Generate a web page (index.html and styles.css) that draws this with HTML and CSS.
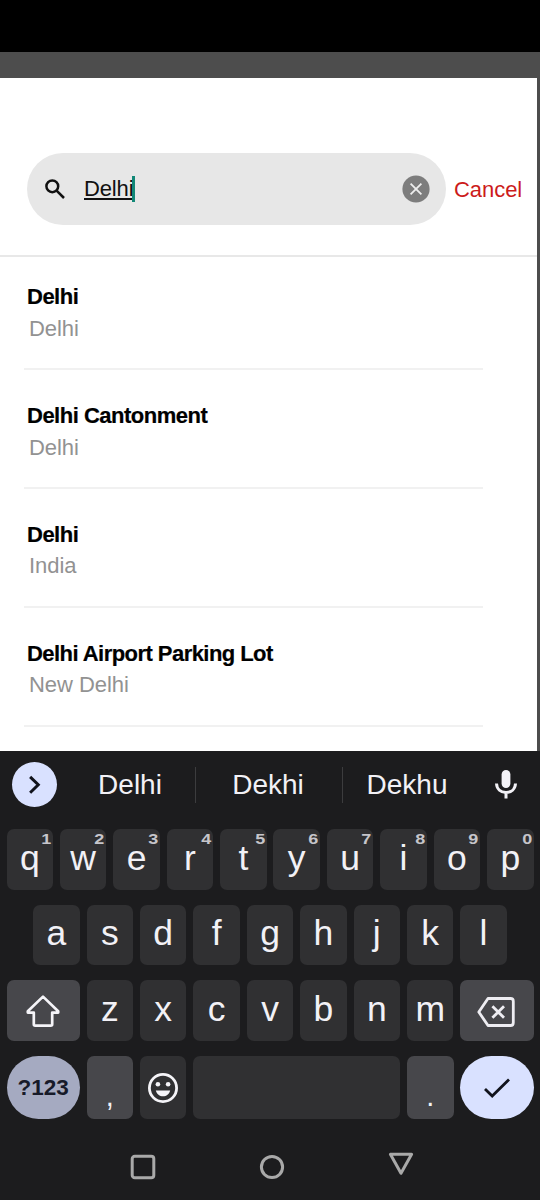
FILE: index.html
```
<!DOCTYPE html>
<html lang="en">
<head>
<meta charset="utf-8">
<title>Location search</title>
<link rel="stylesheet" href="styles.css">
</head>
<body>
<div class="phone">
  <div class="status"></div>
  <main class="backdrop">
    <section class="sheet">
      <header class="search">
        <div class="field">
          <svg class="lens" viewBox="0 0 20 20"><circle cx="7.3" cy="7.3" r="5.9"/><path d="M11.6 11.6 19 19"/></svg>
          <span class="query">Delhi</span><i class="caret"></i>
          <svg class="clear" viewBox="0 0 28 28"><circle cx="14" cy="14" r="13.6"/><path d="M8.6 8.6 19.4 19.4M19.4 8.6 8.6 19.4"/></svg>
        </div>
        <span class="cancel">Cancel</span>
      </header>
      <ul class="results">
        <li class="item"><b class="name">Delhi</b><span class="area">Delhi</span></li>
        <li class="item"><b class="name">Delhi Cantonment</b><span class="area">Delhi</span></li>
        <li class="item"><b class="name">Delhi</b><span class="area">India</span></li>
        <li class="item"><b class="name long">Delhi Airport Parking Lot</b><span class="area">New Delhi</span></li>
      </ul>
    </section>
  </main>
  <section class="keyboard">
    <div class="suggest">
      <div class="more"><svg viewBox="0 0 46 46"><path d="M19.3 15 27.5 23 19.3 31"/></svg></div>
      <span class="word w1">Delhi</span>
      <span class="word w2">Dekhi</span>
      <span class="word w3">Dekhu</span>
      <svg class="mic" viewBox="0 0 22 30"><rect x="6.6" y="1" width="8.8" height="18" rx="4.4"/><path d="M1.5 14.5C1.8 20.2 5.8 23.4 11 23.4S20.2 20.2 20.5 14.5M11 23.5V29.5"/></svg>
    </div>
    <div class="row r1">
      <div class="key">q<sup>1</sup></div><div class="key">w<sup>2</sup></div><div class="key">e<sup>3</sup></div><div class="key">r<sup>4</sup></div><div class="key">t<sup>5</sup></div><div class="key">y<sup>6</sup></div><div class="key">u<sup>7</sup></div><div class="key">i<sup>8</sup></div><div class="key">o<sup>9</sup></div><div class="key">p<sup>0</sup></div>
    </div>
    <div class="row r2">
      <div class="key">a</div><div class="key">s</div><div class="key">d</div><div class="key">f</div><div class="key">g</div><div class="key">h</div><div class="key">j</div><div class="key">k</div><div class="key">l</div>
    </div>
    <div class="row r3">
      <div class="key wide tone"><svg class="shift" viewBox="0 0 34 34"><path d="M17 2.6 32.2 17.2V18.6H26.2V30.2Q26.2 31.6 24.8 31.6H9.2Q7.8 31.6 7.8 30.2V18.6H1.8V17.2Z"/></svg></div>
      <div class="key">z</div><div class="key">x</div><div class="key">c</div><div class="key">v</div><div class="key">b</div><div class="key">n</div><div class="key">m</div>
      <div class="key wide tone"><svg class="erase" viewBox="0 0 38 30"><path d="M11 1.5H33.5Q36.3 1.5 36.3 4.3V25.7Q36.3 28.5 33.5 28.5H11L1.8 15Z"/><path d="M15.4 9.2 27 20.8M27 9.2 15.4 20.8"/></svg></div>
    </div>
    <div class="row r4">
      <div class="key wide symbols">?123</div>
      <div class="key tone punct">,</div>
      <div class="key"><svg class="smile" viewBox="0 0 32 32"><circle class="line" cx="16" cy="16" r="13.6"/><circle cx="10.9" cy="12.3" r="2.3"/><circle cx="21.1" cy="12.3" r="2.3"/><path d="M8.8 18.4H23.2C22.2 22 19.4 24.3 16 24.3S9.8 22 8.8 18.4Z"/></svg></div>
      <div class="key space"></div>
      <div class="key tone punct">.</div>
      <div class="key wide enter"><svg viewBox="0 0 28 22"><path d="M2 12 9.2 19 26 2.4"/></svg></div>
    </div>
    <nav class="nav">
      <svg class="recent" viewBox="0 0 26 26"><rect x="2.2" y="2.2" width="21.6" height="21.6" rx="2.6"/></svg>
      <svg class="home" viewBox="0 0 26 26"><circle cx="13" cy="13" r="10.6"/></svg>
      <svg class="back" viewBox="0 0 26 26"><path d="M2.4 3.2H23.6L13 22.2Z"/></svg>
    </nav>
  </section>
</div>
</body>
</html>
```
FILE: styles.css
```
* { box-sizing: border-box; }
body { margin: 0; background: #1c1c1e; font-family: "Liberation Sans", Arial, sans-serif; }
svg { display: block; flex: none; fill: none; }
.phone { width: 540px; height: 1200px; overflow: hidden; display: flex; flex-direction: column; }
.status { height: 51.5px; background: #000; flex: none; }
.backdrop { height: 699.8px; flex: none; padding: 26.7px 3px 0 0; background: #4d4d4d; }
.sheet { height: 100%; background: #fff; overflow: hidden; }

.search { height: 178.8px; padding: 75px 0 0 27px; display: flex; align-items: flex-start; border-bottom: 2px solid #e8e8e8; }
.field { width: 419px; height: 71.8px; border-radius: 36px; background: #e7e7e7; display: flex; align-items: center; padding: 0 16px 0 18px; }
.lens { width: 20px; height: 20px; margin-right: 19px; stroke: #111; stroke-width: 2.5; }
.query { font-size: 22px; line-height: 26px; letter-spacing: -.15px; color: #111; text-decoration: underline; text-decoration-thickness: 1.5px; text-underline-offset: 2px; }
.caret { width: 3px; height: 26px; background: #128877; margin-top: -1px; margin-left: -1px; }
.clear { width: 28px; height: 28px; margin-left: auto; stroke: #eee; stroke-width: 1.8; }
.clear circle { fill: #7d7d7d; stroke: none; }
.cancel { margin-left: 8px; font-size: 22px; line-height: 74px; letter-spacing: -.05px; color: #cc1b1b; }

.results { list-style: none; margin: 0; padding: 0 54px 0 24px; }
.item { height: 118.9px; padding: 0 0 23.8px 3px; display: flex; flex-direction: column; justify-content: flex-end; border-bottom: 2px solid #f1f1f1; line-height: 31.5px; font-size: 22px; }
.item:first-child { height: 113px; }
.name { color: #000; letter-spacing: -.5px; -webkit-text-stroke: .2px #000; }
.name.long { letter-spacing: -.55px; }
.area { color: #929292; padding-left: 2px; letter-spacing: -.05px; }

.keyboard { flex: 1; background: #1c1c1e; color: #f2f1f6; padding: 0 6.4px 0 6.5px; }
.suggest { height: 78px; display: flex; align-items: flex-start; padding: 10.5px 0 0 5.5px; }
.more { width: 45px; height: 45px; border-radius: 50%; background: #d9e1ff; }
.more svg { stroke: #11131c; stroke-width: 3; margin-left: -.6px; }
.word { height: 36px; margin-top: 5px; font-size: 28px; line-height: 35px; text-align: center; }
.w1 { width: 138px; padding-left: 8px; }
.w2 { width: 148px; border: solid #3c3c3e; border-width: 0 1.5px; padding-right: 2px; }
.w3 { width: 129px; padding-right: 1px; }
.mic { width: 22px; height: 30px; margin: 7px 0 0 22.8px; stroke: #f2f1f6; stroke-width: 3; }
.mic rect { fill: #f2f1f6; stroke: none; }

.row { display: flex; gap: 6.9px; margin-bottom: 15px; }
.key { position: relative; width: 46.5px; height: 100%; border-radius: 7px; background: #303032; display: flex; align-items: center; justify-content: center; font-size: 35.5px; line-height: 40px; padding-bottom: 4.5px; }
.r1 { height: 60.7px; }
.r1 .key { padding-bottom: 4px; }
.r2 { height: 60.5px; padding: 0 26.7px; }
.r3 { height: 61px; }
.r4 { height: 62.5px; margin: 0; }
.key sup { position: absolute; top: 1px; right: 1.6px; font-size: 15px; line-height: 17px; font-weight: bold; color: #c6c5ca; transform: scaleX(1.2); transform-origin: right; }
.row .wide { width: 73.2px; padding: 0; }
.tone { background: #47474b; }
.shift { width: 34px; height: 34px; stroke: #f5f4f8; stroke-width: 2.7; stroke-linejoin: round; }
.erase { width: 38px; height: 30px; stroke: #eeedf2; stroke-width: 2.8; stroke-linejoin: round; margin: 3px 0 0 -1px; }
.symbols { border-radius: 32px; background: #a5aac1; color: #171a29; font-size: 22.5px; font-weight: bold; }
.punct { font-size: 29px; padding: 16px 0 0; }
.smile { width: 32px; height: 32px; fill: #f5f4f8; }
.smile .line { fill: none; stroke: #f5f4f8; stroke-width: 2.8; }
.r4 .key:not(.punct) { padding-bottom: 0; }
.space { flex: 1; }
.enter { border-radius: 32px; background: #d9e1ff; }
.enter svg { width: 28px; height: 22px; stroke: #11131c; stroke-width: 2.8; }
.nav { display: flex; padding: 35px 0 0 123.2px; gap: 103px; stroke: #a9a9a9; stroke-width: 3; stroke-linejoin: round; }
.nav svg { width: 26px; height: 26px; }
.back { margin-top: -3px; }
```
